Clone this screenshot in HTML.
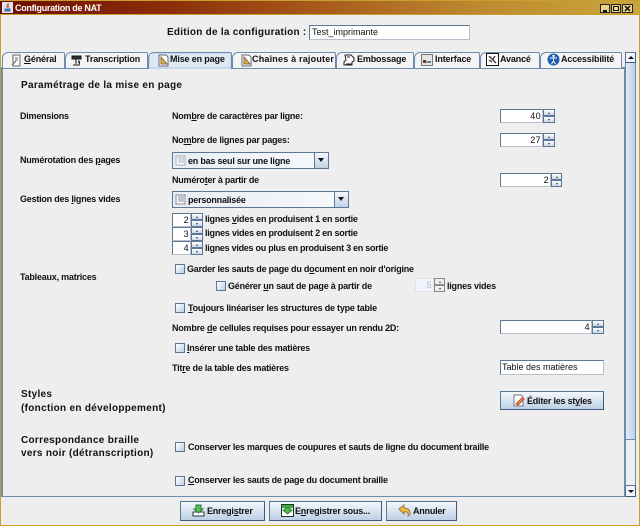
<!DOCTYPE html>
<html><head><meta charset="utf-8"><style>
html,body{margin:0;padding:0}
body{width:640px;height:526px;overflow:hidden;position:relative;background:#eee;font-family:"Liberation Sans",sans-serif;font-size:9px;font-weight:bold;color:#111;letter-spacing:-.22px}
body *{position:absolute;box-sizing:border-box}
u,b,i.n{position:static}
.t{white-space:nowrap;line-height:12px;height:12px}
.h{font-size:10px;letter-spacing:.3px}
.tab{top:52px;height:16px;background:#f4f4f4;border:1px solid #6d8cb0;border-bottom:0;border-radius:6px 2px 0 0}
.tl{top:53px;letter-spacing:-.15px}
.f{background:#fff;border:1px solid #5d7694;border-right-color:#b5c0cc;border-bottom-color:#b5c0cc;font-weight:normal;text-align:right;padding-right:1px;line-height:12px;font-size:9px;letter-spacing:.4px}
.s{background:linear-gradient(#fff,#c8d8ea);border:1px solid #5d7694}
.s:after{content:"";position:absolute;left:50%;margin-left:-1px;top:2px;border:1.5px solid transparent;border-top:0;border-bottom:2px solid #444}
.s.d:after{border:1.5px solid transparent;border-bottom:0;border-top:2px solid #444}
.c{width:10px;height:10px;border:1px solid #5d7694;background:linear-gradient(135deg,#fff,#bcd0e6)}
.b{background:linear-gradient(#f4f8fc,#bdd0e5);border:1px solid #5d7694;border-right-color:#3f5a7c;border-bottom-color:#3f5a7c}
.cb{background:#fff;border:1px solid #5d7694}
.ar{background:linear-gradient(#f4f8fc,#c0d2e6);border-left:1px solid #5d7694;top:0;bottom:0;right:0;width:14px}
.ar:after{content:"";position:absolute;left:3px;top:5px;border:3.5px solid transparent;border-bottom:0;border-top:4px solid #111}
</style></head><body>

<!-- window frame -->
<div style="left:0;top:0;width:640px;height:526px;border:1px solid #c8a030;border-top:0"></div>
<div style="left:0;top:0;width:640px;height:15px;background:linear-gradient(90deg,#6e0d00 0,#8a2c08 25%,#a85a1c 50%,#bd8a30 75%,#c9a63a 100%);border-top:1px solid #c8a030;border-bottom:1px solid #c8a030"></div>
<svg style="left:2px;top:2px" width="11" height="11" viewBox="0 0 11 11"><rect width="11" height="11" fill="#dce6f2"/><path d="M2 9h7M3 7h5l-1 2H4z" fill="#3b6ea8" stroke="#3b6ea8"/><path d="M6 1c1 2-2 2-1 4 1 1 2 0 1-2" fill="none" stroke="#d8641c" stroke-width="1.2"/></svg>
<div class="t" style="left:15px;top:2px;color:#fff;font-size:9px;letter-spacing:-.3px;font-weight:bold">Configuration de NAT</div>
<div style="left:600px;top:4px;width:10px;height:9px;background:#e9d48a;border:1px solid #222"><div style="left:2px;top:5px;width:4px;height:2px;background:#111"></div></div>
<div style="left:611px;top:4px;width:10px;height:9px;background:#e9d48a;border:1px solid #222"><div style="left:1px;top:1px;width:6px;height:5px;border:1px solid #111"></div></div>
<div style="left:622px;top:4px;width:11px;height:9px;background:#e9d48a;border:1px solid #222"><svg style="left:1px;top:0" width="7" height="7" viewBox="0 0 7 7"><path d="M1 1l5 5M6 1l-5 5" stroke="#111" stroke-width="1.5"/></svg></div>

<!-- header -->
<div class="t" style="left:167px;top:27px;font-size:10px;letter-spacing:.25px">Edition de la configuration :</div>
<div class="f" style="left:309px;top:25px;width:161px;height:15px;text-align:left;padding-left:2px;letter-spacing:0">Test_imprimante</div>

<!-- content panel -->
<div style="left:1px;top:67px;width:624px;height:430px;border:1px solid #6d8cb0;border-width:2px 1px 1px 2px;background:#eee"></div>

<!-- tabs -->
<div class="tab" style="left:2px;width:63px"></div>
<div class="tab" style="left:65px;width:83px"></div>
<div class="tab" style="left:232px;width:104px"></div>
<div class="tab" style="left:336px;width:78px"></div>
<div class="tab" style="left:414px;width:66px"></div>
<div class="tab" style="left:480px;width:60px"></div>
<div class="tab" style="left:540px;width:82px"></div>
<div class="tab" style="left:148px;width:84px;top:52px;height:17px;background:#c6daef;border-bottom:0"></div>
<div style="left:150px;top:54px;width:80px;height:13px;background:#dfe9f4"></div>

<svg style="left:10px;top:54px" width="13" height="13" viewBox="0 0 13 13"><path d="M3 1h7v11H3zM5 4h3M5 6h3M2 11l4-4" fill="#fff" stroke="#666"/></svg>
<div class="t tl" style="left:24px"><u>G</u>énéral</div>
<svg style="left:70px;top:54px" width="13" height="13" viewBox="0 0 13 13"><path d="M2 2h9v3H2zM6 5v5M3 11h7M8 7c2 0 2 2 1 3" fill="#333" stroke="#111"/></svg>
<div class="t tl" style="left:85px">Transcription</div>
<svg style="left:157px;top:54px" width="13" height="13" viewBox="0 0 13 13"><path d="M2 1h7l2 2v9H2z" fill="#fff" stroke="#667"/><path d="M4 3v7h6z" fill="#e8b820" stroke="#865"/></svg>
<div class="t tl" style="left:170px">Mise en page</div>
<svg style="left:240px;top:54px" width="13" height="13" viewBox="0 0 13 13"><path d="M2 1h7l2 2v9H2z" fill="#fff" stroke="#667"/><path d="M4 3v7h6z" fill="#e8b820" stroke="#865"/></svg>
<div class="t tl" style="left:252px;letter-spacing:.2px">Chaînes à rajouter</div>
<svg style="left:342px;top:53px" width="14" height="14" viewBox="0 0 14 14"><path d="M3 2h6l3 3v3l-2 1v3H2V9l2-2z" fill="#fff" stroke="#222"/><path d="M4 11h6M5 4h3" stroke="#222"/></svg>
<div class="t tl" style="left:357px">Embossage</div>
<svg style="left:421px;top:54px" width="12" height="12" viewBox="0 0 12 12"><rect x=".5" y=".5" width="11" height="11" fill="#e4e4e4" stroke="#777"/><rect x="2" y="6" width="3" height="3" fill="#444"/><rect x="5" y="7" width="2" height="2" fill="#c84"/><rect x="7" y="7" width="3" height="2" fill="#48a"/></svg>
<div class="t tl" style="left:435px">Interface</div>
<svg style="left:486px;top:53px" width="13" height="13" viewBox="0 0 13 13"><rect x=".5" y=".5" width="12" height="12" fill="#fff" stroke="#111"/><path d="M3 3l7 7M6 9l-3-2M9 3L7 6" stroke="#333" stroke-width="1.3"/></svg>
<div class="t tl" style="left:500px">Avancé</div>
<svg style="left:547px;top:53px" width="13" height="13" viewBox="0 0 13 13"><circle cx="6.5" cy="6.5" r="6" fill="#1f5fb0"/><circle cx="6.5" cy="3" r="1.2" fill="#fff"/><path d="M3 5h7M6.500 5v3M6.500 8l-2 3M6.500 8l2 3" stroke="#fff"/></svg>
<div class="t tl" style="left:561px">Accessibilité</div>

<!-- scrollbar -->
<div style="left:625px;top:52px;width:11px;height:445px;background:#eee;border:1px solid #6d8cb0"></div>
<div style="left:625px;top:62px;width:11px;height:378px;background:linear-gradient(90deg,#e4edf6,#bcd0e6);border:1px solid #6d8cb0"></div>
<div class="b" style="left:625px;top:52px;width:11px;height:11px;background:#f2f5f9"><div style="left:2px;top:3px;border:3px solid transparent;border-top:0;border-bottom:3px solid #111"></div></div>
<div class="b" style="left:625px;top:485px;width:11px;height:12px;background:#f2f5f9"><div style="left:2px;top:4px;border:3px solid transparent;border-bottom:0;border-top:3px solid #111"></div></div>

<!-- labels left -->
<div class="t h" style="left:21px;top:80px">Paramétrage de la mise en page</div>
<div class="t" style="left:20px;top:110px">Dimensions</div>
<div class="t" style="left:20px;top:154px">Numérotation des <u>p</u>ages</div>
<div class="t" style="left:20px;top:193px">Gestion des <u>l</u>ignes vides</div>
<div class="t" style="left:20px;top:271px">Tableaux, matrices</div>
<div class="t h" style="left:21px;top:389px">Styles</div>
<div class="t h" style="left:21px;top:403px">(fonction en développement)</div>
<div class="t h" style="left:21px;top:435px">Correspondance braille</div>
<div class="t h" style="left:21px;top:448px">vers noir (détranscription)</div>

<!-- dims -->
<div class="t" style="left:172px;top:110px">Nom<u>b</u>re de caractères par ligne:</div>
<div class="f" style="left:500px;top:109px;width:43px;height:14px">40</div>
<div class="s" style="left:543px;top:109px;width:12px;height:7px"></div>
<div class="s d" style="left:543px;top:116px;width:12px;height:7px"></div>

<div class="t" style="left:172px;top:134px">No<u>m</u>bre de lignes par pages:</div>
<div class="f" style="left:500px;top:133px;width:43px;height:14px">27</div>
<div class="s" style="left:543px;top:133px;width:12px;height:7px"></div>
<div class="s d" style="left:543px;top:140px;width:12px;height:7px"></div>

<!-- combo 1 -->
<div class="cb" style="left:172px;top:152px;width:157px;height:17px;background:linear-gradient(90deg,#e8eef5,#f6f8fb)"><div class="ar"></div>
<svg style="left:2px;top:2px" width="11" height="11" viewBox="0 0 11 11"><path d="M1 1h9v9H1zM3 3h6M3 5h6M3 7h6" fill="#fff" stroke="#aab"/></svg>
<div class="t" style="left:15px;top:2px">en bas seul sur une ligne</div></div>

<div class="t" style="left:172px;top:174px">Numéro<u>t</u>er à partir de</div>
<div class="f" style="left:500px;top:173px;width:51px;height:14px">2</div>
<div class="s" style="left:551px;top:173px;width:11px;height:7px"></div>
<div class="s d" style="left:551px;top:180px;width:11px;height:7px"></div>

<!-- combo 2 -->
<div class="cb" style="left:172px;top:191px;width:177px;height:17px;background:linear-gradient(90deg,#e8eef5,#f6f8fb)"><div class="ar"></div>
<svg style="left:2px;top:2px" width="11" height="11" viewBox="0 0 11 11"><path d="M1 1h9v9H1zM3 3h6M3 5h6M3 7h6" fill="#fff" stroke="#889"/></svg>
<div class="t" style="left:15px;top:2px">personnalisée</div></div>

<!-- small spinners -->
<div class="f" style="left:172px;top:213px;width:19px;height:14px">2</div>
<div class="s" style="left:191px;top:213px;width:12px;height:7px"></div>
<div class="s d" style="left:191px;top:220px;width:12px;height:7px"></div>
<div class="t" style="left:205px;top:213px">lignes <u>v</u>ides en produisent 1 en sortie</div>
<div class="f" style="left:172px;top:227px;width:19px;height:14px">3</div>
<div class="s" style="left:191px;top:227px;width:12px;height:7px"></div>
<div class="s d" style="left:191px;top:234px;width:12px;height:7px"></div>
<div class="t" style="left:205px;top:227px">lignes vides en produisent 2 en sortie</div>
<div class="f" style="left:172px;top:241px;width:19px;height:14px">4</div>
<div class="s" style="left:191px;top:241px;width:12px;height:7px"></div>
<div class="s d" style="left:191px;top:248px;width:12px;height:7px"></div>
<div class="t" style="left:205px;top:242px;letter-spacing:-.27px">lignes vides ou plus en produisent 3 en sortie</div>

<!-- checks -->
<div class="c" style="left:175px;top:264px"></div>
<div class="t" style="left:187px;top:263px">Garder les sauts de page du d<u>o</u>cument en noir d'origine</div>
<div class="c" style="left:216px;top:281px"></div>
<div class="t" style="left:228px;top:280px">Générer <u>u</u>n saut de page à partir de</div>
<div class="f" style="left:415px;top:278px;width:19px;height:14px;border-color:#dde3ea;color:#a8bcd4;background:#f0f3f7">5</div>
<div class="s" style="left:434px;top:278px;width:11px;height:7px;border-color:#888;background:#eee"></div>
<div class="s d" style="left:434px;top:285px;width:11px;height:7px;border-color:#888;background:#eee"></div>
<div class="t" style="left:447px;top:280px">lignes vides</div>
<div class="c" style="left:175px;top:303px"></div>
<div class="t" style="left:188px;top:302px"><u>T</u>oujours linéariser les structures de type table</div>
<div class="t" style="left:172px;top:322px">Nombre <u>d</u>e cellules requises pour essayer un rendu 2D:</div>
<div class="f" style="left:500px;top:320px;width:92px;height:14px">4</div>
<div class="s" style="left:592px;top:320px;width:12px;height:7px"></div>
<div class="s d" style="left:592px;top:327px;width:12px;height:7px"></div>
<div class="c" style="left:175px;top:343px"></div>
<div class="t" style="left:187px;top:342px"><u>I</u>nsérer une table des matières</div>
<div class="t" style="left:172px;top:362px">Tit<u>r</u>e de la table des matières</div>
<div class="f" style="left:500px;top:360px;width:104px;height:15px;text-align:left;padding-left:1px;letter-spacing:0">Table des matières</div>

<div class="b" style="left:500px;top:391px;width:104px;height:19px"></div>
<svg style="left:513px;top:394px" width="12" height="13" viewBox="0 0 12 13"><path d="M1 1h7l2 2v9H1z" fill="#fff" stroke="#778"/><path d="M3 10l6-6 2 1-6 6z" fill="#e8a020" stroke="#c43"/></svg>
<div class="t" style="left:527px;top:395px">Éditer les st<u>y</u>les</div>

<div class="c" style="left:175px;top:442px"></div>
<div class="t" style="left:188px;top:441px">Conserver les marques de coupures et sauts de ligne du document braille</div>
<div class="c" style="left:175px;top:476px"></div>
<div class="t" style="left:188px;top:474px"><u>C</u>onserver les sauts de page du document braille</div>

<!-- bottom buttons -->
<div class="b" style="left:180px;top:501px;width:85px;height:20px"></div>
<svg style="left:192px;top:504px" width="13" height="13" viewBox="0 0 13 13"><path d="M1 8h11v4H1z" fill="#fff" stroke="#334"/><path d="M4 1h5v4h2L6.500 9 2 5h2z" fill="#5cc040" stroke="#274"/></svg>
<div class="t" style="left:207px;top:505px">Enregi<u>s</u>trer</div>
<div class="b" style="left:269px;top:501px;width:113px;height:20px"></div>
<svg style="left:281px;top:504px" width="13" height="13" viewBox="0 0 13 13"><rect x=".5" y=".5" width="12" height="12" fill="#fff" stroke="#232"/><path d="M1 1h11v3H1z" fill="#4a4"/><path d="M4 4h5v2h2L6.500 10 2 6h2z" fill="#5cc040" stroke="#274"/></svg>
<div class="t" style="left:295px;top:505px">E<u>n</u>registrer sous...</div>
<div class="b" style="left:386px;top:501px;width:71px;height:20px"></div>
<svg style="left:398px;top:504px" width="13" height="13" viewBox="0 0 13 13"><path d="M1 5l5-4v3c4 0 6 2 6 5 0 2-1 3-2 3 1-3-1-5-4-4v2z" fill="#f0c030" stroke="#975"/></svg>
<div class="t" style="left:413px;top:505px">Annuler</div>
</body></html>
